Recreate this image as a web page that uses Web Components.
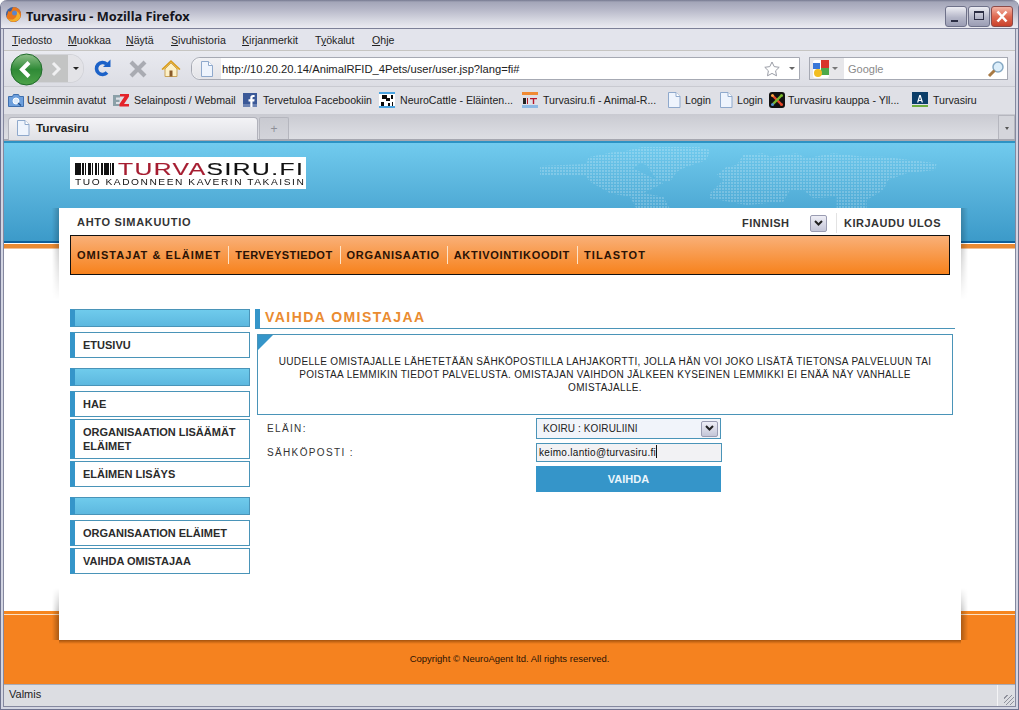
<!DOCTYPE html>
<html lang="fi">
<head>
<meta charset="utf-8">
<title>Turvasiru - Mozilla Firefox</title>
<style>
  html, body { margin: 0; height: 100%; overflow: hidden; background: #fff; }
</style>
</head>
<body>
<browser-window>
  <title-bar>Turvasiru - Mozilla Firefox</title-bar>
  <menu-bar></menu-bar>
  <nav-bar></nav-bar>
  <bookmarks-bar></bookmarks-bar>
  <tab-strip></tab-strip>
  <site-page>
    <site-banner></site-banner>
    <site-card>
      <user-row></user-row>
      <main-nav></main-nav>
      <content-area>
        <side-menu></side-menu>
        <owner-form></owner-form>
      </content-area>
    </site-card>
    <site-footer></site-footer>
  </site-page>
  <status-bar>Valmis</status-bar>
</browser-window>

<script>
const UI_FONT = '"Liberation Sans", Arial, sans-serif';
const CHROME_FONT = '"Liberation Sans", Arial, sans-serif';

// Small icons shared by the bookmarks toolbar and the tab
const ICONS = {
  page: `<svg width="16" height="16" viewBox="0 0 16 16"><path d="M2.500 .5h7.500l4 4v11h-11.500z" fill="#eef4fd" stroke="#8fa9cc"/><path d="M10 .5v4h4" fill="#fff" stroke="#8fa9cc"/></svg>`,
  history: `<svg width="16" height="16" viewBox="0 0 16 16"><path d="M.5 4.500h4l1-2h5l1 2h4v10h-15z" fill="#6d9fdc" stroke="#3f6fae"/><circle cx="8" cy="9" r="3" fill="#dcebfb" stroke="#fff"/><path d="M10 11l3 2.500" stroke="#24508c" stroke-width="1.500"/></svg>`,
  ez: `<svg width="16" height="16" viewBox="0 0 16 16"><path d="M0 3h7v2.500H3v2.200h3.500v2.200H3v2H7V14H0z" fill="#8ba0a8"/><path d="M7 2h9v2.500L11 12h5v2.500H6.500V12l5-7.500H7z" fill="#e3232a"/></svg>`,
  fb: `<svg width="16" height="16" viewBox="0 0 16 16"><rect x="1" y="1" width="14" height="14" fill="#3b5998"/><rect x="1" y="12" width="14" height="3" fill="#6d84b4"/><path d="M10.500 15V9.500h1.800l.3-2.200h-2.100V6c0-.7.2-1.100 1.100-1.100h1V3c-.3 0-.9-.1-1.500-.1-1.700 0-2.800 1-2.800 2.800v1.600H6.500v2.200h1.800V15z" fill="#fff"/></svg>`,
  cattle: `<svg width="16" height="16" viewBox="0 0 16 16"><rect width="16" height="16" fill="#fff"/><path d="M0 0h16v2H0zM0 14h16v2H0z" fill="#4aa3e0"/><path d="M3 3h5v3h3v3H7V7H3zM12 3h2v4h-2zM2 10h3v4H2zM9 11h2v3H9zM13 10h1v4h-1z" fill="#0a0a0a"/></svg>`,
  it: `<svg width="16" height="16" viewBox="0 0 16 16"><rect width="16" height="3" fill="#f08a33"/><rect y="13" width="16" height="3" fill="#8db9e4"/><rect x="1" y="6" width="3" height="6" fill="#222"/><rect x="5" y="6" width="1" height="6" fill="#b5172b"/><path d="M8 6h7v1.200h-2.800V12h-1.400V7.200H8z" fill="#b5172b"/></svg>`,
  joomla: `<svg width="16" height="16" viewBox="0 0 16 16"><rect width="16" height="16" rx="3" fill="#111"/><path d="M4 4l8 8" stroke="#e8482b" stroke-width="2.400"/><path d="M12 4l-8 8" stroke="#7ab92d" stroke-width="2.400"/><circle cx="3.500" cy="3.500" r="1.500" fill="#f9a541"/><circle cx="12.500" cy="3.500" r="1.500" fill="#7ab92d"/><circle cx="3.500" cy="12.500" r="1.500" fill="#5091cd"/><circle cx="12.500" cy="12.500" r="1.500" fill="#e8482b"/></svg>`,
  a: `<svg width="16" height="16" viewBox="0 0 16 16"><rect width="16" height="12" fill="#0b3d68"/><rect y="13" width="16" height="2" fill="#6fae3d"/><path d="M5 10.500L7.300 3h1.400L11 10.500H9.600l-.4-1.500H6.800l-.4 1.500zM7.100 7.900h1.800L8 4.700z" fill="#fff"/></svg>`,
};

// Base class: subclasses give css() and html(), the shadow root is filled once
class ShadowBlock extends HTMLElement {
  connectedCallback() {
    if (this.shadowRoot) return;
    this.attachShadow({ mode: 'open' });
    this.shadowRoot.innerHTML = `<style>${this.css()}</style>${this.html()}`;
  }

  css() { return ':host { display: block; }'; }

  html() { return '<slot></slot>'; }
}

// Window frame: outer dark line, pale band, inner dark line (4px in all)
class BrowserWindow extends ShadowBlock {
  css() {
    return `:host {
      display: block; box-sizing: border-box;
      width: 1019px; height: 710px; overflow: hidden;
      border: 1px solid #6f738f; border-top: 0; padding: 0 2px 2px;
      border-radius: 7px 7px 0 0;
      background: #d3d5e2; font-family: ${CHROME_FONT}; font-size: 11px; color: #111;
    }
    .inner {
      display: flex; flex-direction: column; box-sizing: border-box; height: 100%;
      border: 1px solid #85889f; border-top: 0; background: #dfe0e6;
    }`;
  }

  html() { return '<div class="inner"><slot></slot></div>'; }
}

class TitleBar extends ShadowBlock {
  css() {
    return `:host {
      display: flex; align-items: center; height: 29px; flex: none; box-sizing: border-box;
      margin: 0 -4px; padding: 1px 6px 0 5px; gap: 4px;
      background: linear-gradient(#75788f 0, #a3a5b8 2px, #b5b6c7 9px, #d6d7e1 20px, #e9e9f0 27px);
      border-bottom: 1px solid #7d8098;
    }
    .title { flex: 1; font: bold 12.800px "Noto Sans", sans-serif; color: #15151c; padding-top: 3px; }
    .btns { display: flex; gap: 1px; margin-top: 3px; }
    .btn {
      box-sizing: border-box; width: 22px; height: 21px; border: 1px solid #6e7189; border-radius: 3px;
      background: linear-gradient(#eeeef4, #b4b6c8 55%, #9b9db4);
      position: relative;
    }
    .min::after { content: ""; position: absolute; left: 5px; bottom: 4px; width: 7px; height: 2px; background: #2c2e44; }
    .max::after { content: ""; position: absolute; left: 5px; top: 4px; width: 10px; height: 9px; border: 1px solid #2c2e44; border-top-width: 2px; box-sizing: border-box; }
    .close { background: linear-gradient(#f2b3a5, #df6a52 50%, #c9412c); border-color: #8c4a48; }
    svg { display: block; }`;
  }

  html() {
    return `<svg width="17" height="17" viewBox="0 0 17 17">
        <circle cx="8.500" cy="8.500" r="7.500" fill="#3d5f9c"/>
        <path d="M8.500 1a7.500 7.500 0 1 1-7 10C2 8 3 8 3 5c1.500 1 3 .5 3.500-.5.500-1.500 1-2.500 2-3.500z" fill="#e8761c"/>
        <path d="M15.500 10.500A7.500 7.500 0 0 1 2 12c3 2.500 7 2 9-1 1.500-2.500 0-5-2-5 2-2 5-.5 6.500 4.500z" fill="#f3b02c"/>
        <circle cx="9.500" cy="7" r="2.500" fill="#5e85c8"/>
      </svg>
      <span class="title"><slot></slot></span>
      <div class="btns">
        <div class="btn min"></div>
        <div class="btn max"></div>
        <div class="btn close"><svg width="20" height="19" viewBox="0 0 20 19"><path d="M5.500 4.500l9 10M14.500 4.500l-9 10" stroke="#fff" stroke-width="2.600"/></svg></div>
      </div>`;
  }
}

class MenuBar extends ShadowBlock {
  css() {
    return `:host {
      display: flex; align-items: center; height: 22px; flex: none; box-sizing: border-box;
      padding: 1px 0 0 8px; background: #e3e4ec; border-bottom: 1px solid #c6c5c2;
      font-size: 10.600px; color: #222;
    }
    span { flex: none; }
    u { text-decoration-thickness: 1px; text-underline-offset: 1px; }`;
  }

  html() {
    const items = [['<u>T</u>iedosto', 56], ['<u>M</u>uokkaa', 58], ['<u>N</u>äytä', 45], ['<u>S</u>ivuhistoria', 71],
      ['<u>K</u>irjanmerkit', 73], ['T<u>y</u>ökalut', 57], ['<u>O</u>hje', 30]];
    return items.map(([m, w]) => `<span style="width:${w}px">${m}</span>`).join('');
  }
}

class NavBar extends ShadowBlock {
  css() {
    return `:host {
      display: flex; align-items: center; height: 36px; flex: none; box-sizing: border-box;
      padding: 0 6px 0 6px; background: linear-gradient(#e9eaf0, #dcdde4); border-bottom: 1px solid #c9cad1;
      position: relative;
    }
    svg { display: block; flex: none; }
    .back-fwd { position: relative; width: 76px; height: 34px; flex: none; }
    .pill {
      position: absolute; left: 16px; top: 3px; width: 57px; height: 27px; border-radius: 0 13px 13px 0;
      background: linear-gradient(to right, #c3c4c4 0 42px, #e3e3e7 42px);
      box-shadow: 0 0 0 1px #d2d3d8;
    }
    .back { position: absolute; left: 0; top: 1px; }
    .fwd { position: absolute; left: 41px; top: 9px; }
    .drop { position: absolute; left: 63px; top: 15px; width: 0; height: 0; border: 3px solid transparent; border-top: 3px solid #222; }
    .url {
      box-sizing: border-box; flex: none; width: 609px; height: 23px; margin-left: 10px;
      display: flex; align-items: center; background: #fff; border: 1px solid #a6a9b3; border-radius: 9px 0 0 9px;
      font-size: 11px; color: #222; position: relative;
    }
    .site { width: 29px; height: 21px; display: flex; align-items: center; justify-content: center; background: linear-gradient(#f1f1f4, #e4e4e8); border-radius: 9px 0 0 9px; flex: none; }
    .text { flex: 1; padding: 1px 0 0 1px; font-size: 11.200px; }
    .marker { width: 0; height: 0; border: 3px solid transparent; border-top: 3px solid #666; margin: 3px 4px 0 9px; }
    .search {
      box-sizing: border-box; flex: none; width: 199px; height: 23px; margin-left: 9px;
      display: flex; align-items: center; background: #fff; border: 1px solid #a6a9b3;
      color: #8a8a8a; font-size: 11px;
    }
    .engine { display: flex; align-items: center; gap: 3px; padding: 0 6px 0 3px; height: 21px; background: #e7e7ea; }
    .engine i { width: 0; height: 0; border: 3px solid transparent; border-top: 3px solid #777; margin-top: 3px; }
    .q { flex: 1; padding: 1px 0 0 4px; }
    .glass { margin-right: 2px; }`;
  }

  html() {
    return `<div class="back-fwd">
        <div class="pill"></div>
        <svg class="back" width="33" height="33" viewBox="0 0 33 33">
          <defs><linearGradient id="g" x1="0" y1="0" x2="0" y2="1"><stop offset="0" stop-color="#8fc08a"/><stop offset=".5" stop-color="#2f8a36"/><stop offset="1" stop-color="#4ea34a"/></linearGradient></defs>
          <circle cx="16.500" cy="16.500" r="15.500" fill="url(#g)" stroke="#1f6a2a"/>
          <path d="M19 9.500l-7 7 7 7" fill="none" stroke="#fff" stroke-width="4"/>
        </svg>
        <svg class="fwd" width="10" height="16" viewBox="0 0 10 16"><path d="M2 2l6 6-6 6" fill="none" stroke="#f0f0f2" stroke-width="3"/></svg>
        <div class="drop"></div>
      </div>
      <svg style="margin-left:6px" width="20" height="20" viewBox="0 0 20 20"><path d="M15 13.500A6 6 0 1 1 14.500 5" fill="none" stroke="#1c62c8" stroke-width="3.600"/><path d="M11 8h7.500V.500z" fill="#1c62c8"/></svg>
      <svg style="margin-left:16px" width="20" height="20" viewBox="0 0 20 20"><path d="M3 3l14 14M17 3L3 17" stroke="#a9abb2" stroke-width="4.200"/></svg>
      <svg style="margin-left:13px" width="20" height="20" viewBox="0 0 20 20"><path d="M1 10.500L10 2l9 8.500" fill="#f6c64a" stroke="#d69a1e" stroke-width="1.400"/><path d="M4 10l6-6 6 6v7.500H4z" fill="#fdf1c8" stroke="#c9a35a"/><path d="M8.500 11.500h3v6h-3z" fill="#8a5a2a"/></svg>
      <div class="url">
        <div class="site"><svg width="14" height="16" viewBox="0 0 14 16"><path d="M1.500 .5h7l4 4v11h-11z" fill="#eef4fd" stroke="#8fa9cc"/><path d="M8.500 .5v4h4" fill="#fff" stroke="#8fa9cc"/></svg></div>
        <span class="text">http://10.20.20.14/AnimalRFID_4Pets/user/user.jsp?lang=fi#</span>
        <svg width="16" height="16" viewBox="0 0 16 16"><path d="M8 1l2.200 4.600 5 .7-3.600 3.500.9 5L8 12.400l-4.500 2.400.9-5L.8 6.300l5-.7z" fill="#fff" stroke="#9a9da6"/></svg>
        <div class="marker"></div>
      </div>
      <div class="search">
        <div class="engine">
          <svg width="16" height="18" viewBox="0 0 16 18"><rect width="16" height="18" rx="2" fill="#fff"/><path d="M8 0h8v8H8z" fill="#d8352a"/><path d="M8 8h8v7H8z" fill="#4da94a"/><path d="M0 3h7v6H0z" fill="#3a78d8"/><circle cx="5" cy="13" r="4" fill="#f2be20"/></svg>
          <i></i>
        </div>
        <span class="q">Google</span>
        <svg class="glass" width="18" height="18" viewBox="0 0 18 18"><circle cx="11" cy="7" r="5" fill="#dceefa" stroke="#86a9c4" stroke-width="1.500"/><path d="M7.500 10.500L2 16" stroke="#a87a44" stroke-width="3"/></svg>
      </div>`;
  }
}

class BookmarksBar extends ShadowBlock {
  css() {
    return `:host {
      display: flex; align-items: center; height: 27px; flex: none; box-sizing: border-box;
      padding: 0 0 2px 4px; background: #dfe0e6; font-size: 10.600px; color: #222;
    }
    .b { display: flex; align-items: center; gap: 5px; white-space: nowrap; flex: none; box-sizing: border-box; }
    .b.tight { gap: 3px; }
    svg { display: block; flex: none; }`;
  }

  html() {
    const items = [
      ['history', 'Useimmin avatut', 105, 'tight'], ['ez', 'Selainposti / Webmail', 129], ['fb', 'Tervetuloa Facebookiin', 137],
      ['cattle', 'NeuroCattle - Eläinten...', 143], ['it', 'Turvasiru.fi - Animal-R...', 144], ['page', 'Login', 52, 'tight'],
      ['page', 'Login', 51, 'tight'], ['joomla', 'Turvasiru kauppa - Yll...', 143, 'tight'], ['a', 'Turvasiru', 80],
    ];
    return items.map(([icon, label, w, cls = '']) => `<span class="b ${cls}" style="width:${w}px">${ICONS[icon]}<span>${label}</span></span>`).join('');
  }
}

class TabStrip extends ShadowBlock {
  css() {
    return `:host {
      display: flex; align-items: flex-end; height: 27px; flex: none; box-sizing: border-box;
      padding: 0 0 0 4px; background: linear-gradient(#c9cad1, #d8d9df 70%, #dddee3);
      border-bottom: 2px solid #a6a7b0; position: relative;
    }
    .tab {
      box-sizing: border-box; width: 250px; height: 23px; margin-bottom: -1px; padding: 0 0 2px 6px;
      display: flex; align-items: center; gap: 5px;
      background: linear-gradient(#f3f3f6, #dfe0e5); border: 1px solid #b1b2bb; border-bottom: 0; border-radius: 4px 4px 0 0;
      font-weight: bold; font-size: 11.800px; color: #222;
    }
    .new {
      box-sizing: border-box; width: 30px; height: 22px; margin-left: 1px; display: flex; align-items: center; justify-content: center;
      background: linear-gradient(#c9cad1, #d3d4da); border: 1px solid #b5b6be; border-bottom: 0; color: #8e8f98; font-size: 12px; border-radius: 2px 2px 0 0;
    }
    .all {
      margin-left: auto; box-sizing: border-box; width: 17px; height: 24px; border: 1px solid #b5b6be; border-bottom: 0;
      display: flex; align-items: center; justify-content: center; background: #d4d5db;
    }
    .all i { width: 0; height: 0; border: 2.500px solid transparent; border-top: 3px solid #555; margin-top: 3px; }
    svg { display: block; }`;
  }

  html() {
    return `<div class="tab">${ICONS.page}<span>Turvasiru</span></div>
      <div class="new">+</div>
      <div class="all"><i></i></div>`;
  }
}

// The web page: background bands and the white card share one grid cell
class SitePage extends ShadowBlock {
  css() {
    return `:host {
      display: grid; flex: 1; min-height: 0; font-family: ${UI_FONT}; color: #222;
      grid-template-columns: 1fr; grid-template-rows: 1fr; background: #fff;
    }
    ::slotted(site-banner) { grid-area: 1 / 1; align-self: start; }
    ::slotted(site-footer) { grid-area: 1 / 1; align-self: end; }
    ::slotted(site-card) { grid-area: 1 / 1; align-self: start; z-index: 1; }`;
  }
}

class SiteBanner extends ShadowBlock {
  css() {
    return `:host { display: block; }
    .sky {
      position: relative; height: 102px; box-sizing: border-box; padding: 13px 0 0 66px;
      border-top: 2px solid #2d93c4;
      background: linear-gradient(#71cbee 0, #5fb9e0 35%, #3c9ac9 100%);
      border-bottom: 2px solid #0d5f9a;
    }
    .rule { height: 4px; background: #e98a33; border-bottom: 1px solid #f3c096; margin-top: 1px; }
    .map { position: absolute; left: 536px; top: 4px; }
    .logo {
      width: 236px; height: 32px; background: #fff; box-sizing: border-box; margin-top: 1px;
      display: grid; grid-template-columns: 40px 1fr; grid-template-rows: 19px 13px; column-gap: 3px; padding: 0 0 0 5px;
      color: #111; overflow: hidden; white-space: nowrap;
    }
    .bars { align-self: end; margin-bottom: 1px; }
    .name {
      font: 17px/19px "Liberation Sans", sans-serif; letter-spacing: 1px; padding-top: 3px;
      transform: scaleX(1.45); transform-origin: left; -webkit-text-stroke: .15px currentColor;
    }
    .name b { font-weight: normal; color: #a51c30; }
    .tag {
      grid-column: 1 / 3; font: 8.500px/11px "Liberation Sans", sans-serif; letter-spacing: 1.280px; padding-top: 1px;
      transform: scaleX(1.2); transform-origin: left;
    }`;
  }

  html() {
    return `<div class="sky">
        <svg class="map" width="400" height="62" viewBox="30 21 1200 186">
          <defs><pattern id="d" width="9" height="9" patternUnits="userSpaceOnUse"><rect width="6" height="6" fill="#fff" fill-opacity=".2"/></pattern></defs>
          <path fill="url(#d)" d="M30 78L170 72 175 52 240 38 290 32 340 20 480 15 540 30 530 60 470 80 440 95 420 125 380 120 350 75 330 70 310 85 360 110 400 130 340 160 400 170 420 207H320L300 170 240 160 180 125 165 105H30z"/>
          <path fill="url(#d)" d="M640 45L700 40 720 50 800 40 830 55 910 40 1000 50 1060 50 1220 70 1215 90 1130 100 1075 120 1060 150 1010 180 1010 207H920V170L850 175 820 150 780 150 760 185 650 195 540 175V160L580 120 560 105 590 80 620 75z"/>
        </svg>
        <div class="logo">
          <svg class="bars" width="40" height="12" viewBox="0 0 40 12"><path d="M0 0h6v12H0zM7 0h2v12H7zM10 0h1v12h-1zM13 0h3v12h-3zM17 0h1v12h-1zM20 0h2v12h-2zM23 0h1v12h-1zM26 0h2v12h-2zM29 0h5v12h-5zM35 0h1v12h-1zM37 0h2v12h-2z" fill="#111"/></svg>
          <div class="name"><b>TURVA</b>SIRU.FI</div>
          <div class="tag">TUO KADONNEEN KAVERIN TAKAISIN</div>
        </div>
      </div>
      <div class="rule"></div>`;
  }
}

class SiteFooter extends ShadowBlock {
  css() {
    return `:host { display: block; }
    .line { height: 3px; background: #f5861f; border-bottom: 1px solid #fbe0c4; }
    .foot {
      height: 69px; background: #f5821f; box-sizing: border-box; padding-top: 38px;
      text-align: center; font-size: 9.500px; line-height: 11px; color: #2a1205;
    }`;
  }

  html() {
    return '<div class="line"></div><div class="foot">Copyright © NeuroAgent ltd. All rights reserved.</div>';
  }
}

class SiteCard extends ShadowBlock {
  css() {
    return `:host {
      display: block; position: relative; box-sizing: border-box;
      width: 902px; height: 432px; margin: 67px 0 0 55px; padding: 0 11px;
    }
    .paper { position: absolute; inset: 0; z-index: -1; background: #fff; }
    .sh { position: absolute; z-index: -1; left: -7px; right: -7px; }
    .top {
      top: 0; height: 92px;
      background: linear-gradient(to right, transparent, rgba(0,0,0,.2) 7px, rgba(0,0,0,.2) calc(100% - 7px), transparent);
      -webkit-mask-image: linear-gradient(#000 40%, transparent);
      mask-image: linear-gradient(#000 40%, transparent);
    }
    .low {
      bottom: 0; height: 52px;
      background: linear-gradient(to right, transparent, rgba(0,0,0,.3) 7px, rgba(0,0,0,.3) calc(100% - 7px), transparent);
      -webkit-mask-image: linear-gradient(transparent, #000 60%);
      mask-image: linear-gradient(transparent, #000 60%);
    }
    .under { position: absolute; z-index: -1; left: 0; right: 0; bottom: -4px; height: 4px; background: linear-gradient(rgba(110,50,0,.6), transparent); }`;
  }

  html() {
    return '<div class="sh top"></div><div class="sh low"></div><div class="under"></div><div class="paper"></div><slot></slot>';
  }
}

class UserRow extends ShadowBlock {
  css() {
    return `:host {
      display: flex; align-items: center; height: 27px; box-sizing: border-box; padding: 3px 9px 0 7px;
      font: bold 11px ${UI_FONT}; letter-spacing: .7px; color: #333;
    }
    .name { flex: 1; margin-top: -2px; }
    .lang { width: 68px; letter-spacing: .5px; }
    .exit { letter-spacing: .5px; }
    .arrow {
      box-sizing: border-box; width: 17px; height: 17px; border: 1px solid #9a9cb2; border-radius: 2px;
      background: linear-gradient(#eeeef6, #c4c6d8); display: flex; align-items: center; justify-content: center;
    }
    .sep { width: 1px; height: 20px; background: #e3e3e3; margin: 0 7px 0 9px; }
    svg { display: block; }`;
  }

  html() {
    return `<span class="name">AHTO SIMAKUUTIO</span>
      <span class="lang">FINNISH</span>
      <span class="arrow"><svg width="9" height="7" viewBox="0 0 9 7"><path d="M1 1l3.500 3.500L8 1" fill="none" stroke="#222" stroke-width="2"/></svg></span>
      <span class="sep"></span>
      <span class="exit">KIRJAUDU ULOS</span>`;
  }
}

class MainNav extends ShadowBlock {
  css() {
    return `:host {
      display: flex; align-items: center; box-sizing: border-box; height: 40px; padding: 0 0 0 6px;
      border: 1px solid #111; background: linear-gradient(#f9b078, #f7821c);
      font: bold 11px ${UI_FONT}; color: #2a1205; white-space: nowrap;
    }
    span + span { border-left: 1px solid #fde3c8; margin-left: 7px; padding-left: 6px; line-height: 18px; }`;
  }

  html() {
    const items = [['OMISTAJAT &amp; ELÄIMET', 1.05], ['TERVEYSTIEDOT', 0.45], ['ORGANISAATIO', 0.7],
      ['AKTIVOINTIKOODIT', 0.7], ['TILASTOT', 1.05]];
    return items.map(([t, ls]) => `<span style="letter-spacing:${ls}px">${t}</span>`).join('');
  }
}

class ContentArea extends ShadowBlock {
  css() {
    return ':host { display: grid; grid-template-columns: 180px 700px; column-gap: 5px; padding-top: 34px; }';
  }
}

class SideMenu extends ShadowBlock {
  css() {
    return `:host { display: flex; flex-direction: column; font: bold 11px ${UI_FONT}; color: #2b2b2b; }
    .head {
      box-sizing: border-box; height: 18px; margin: 10px 0 5px;
      border: 1px solid #4a94b8; border-left: 5px solid #3595c9;
      background: linear-gradient(#6fcbec, #5db8df);
    }
    .head:first-of-type { margin-top: 0; }
    .item {
      box-sizing: border-box; min-height: 26px; margin-bottom: 2px; padding: 5px 6px 5px 8px;
      border: 1px solid #4a94b8; border-left: 5px solid #3595c9; line-height: 14px;
      background: #fff;
    }
    .item.last { margin-bottom: 0; }`;
  }

  html() {
    const item = (t, last) => `<div class="item${last ? ' last' : ''}">${t}</div>`;
    return `<div class="head"></div>${item('ETUSIVU', true)}
      <div class="head"></div>${item('HAE')}${item('ORGANISAATION LISÄÄMÄT ELÄIMET')}${item('ELÄIMEN LISÄYS', true)}
      <div class="head"></div>${item('ORGANISAATION ELÄIMET')}${item('VAIHDA OMISTAJAA', true)}`;
  }
}

class OwnerForm extends ShadowBlock {
  css() {
    return `:host { display: block; font-family: ${UI_FONT}; color: #222; }
    h1 {
      margin: 0; box-sizing: border-box; height: 20px; width: 700px; padding-left: 5px;
      border-left: 5px solid #3595c9; border-bottom: 1px solid #4a94b8;
      font: bold 14px/17px ${UI_FONT}; letter-spacing: 1.450px; color: #ea8b30;
    }
    .note {
      position: relative; box-sizing: border-box; width: 696px; height: 81px; margin: 5px 0 0 2px; padding: 20px 10px 0;
      border: 1px solid #4a94b8; text-align: center;
      font-size: 10px; line-height: 13px; letter-spacing: .34px; color: #222;
    }
    .note::before {
      content: ""; position: absolute; left: 0; top: 0;
      border-top: 15px solid #3595c9; border-right: 15px solid transparent;
    }
    .fields { display: grid; grid-template-columns: 269px 186px; margin: 3px 0 0 12px; row-gap: 4px; align-items: center; }
    label { font-size: 10px; letter-spacing: 1.350px; color: #333; }
    .select {
      box-sizing: border-box; width: 185px; height: 21px; display: flex; align-items: center; justify-content: space-between;
      padding: 0 2px 0 6px; border: 1px solid #4a94b8; background: #f1f4fa; font-size: 10px; letter-spacing: .1px;
    }
    .arrow {
      box-sizing: border-box; width: 17px; height: 16px; border: 1px solid #9a9cb2; border-radius: 2px;
      background: linear-gradient(#eeeef6, #c4c6d8); display: flex; align-items: center; justify-content: center;
    }
    .input {
      box-sizing: border-box; width: 186px; height: 19px; padding-left: 2px; line-height: 17px;
      border: 1px solid #4a94b8; background: #f2f2f4; font-size: 10px; letter-spacing: .3px; color: #111;
    }
    .input i { display: inline-block; width: 1px; height: 13px; background: #111; vertical-align: -2px; }
    .submit {
      grid-column: 2; box-sizing: border-box; width: 185px; height: 26px; background: #3595c9; color: #eaf6fc;
      display: flex; align-items: center; justify-content: center; font: bold 11px ${UI_FONT};
    }
    svg { display: block; }`;
  }

  html() {
    return `<h1>VAIHDA OMISTAJAA</h1>
      <div class="note">UUDELLE OMISTAJALLE LÄHETETÄÄN SÄHKÖPOSTILLA LAHJAKORTTI, JOLLA HÄN VOI JOKO LISÄTÄ TIETONSA PALVELUUN TAI<br>POISTAA LEMMIKIN TIEDOT PALVELUSTA. OMISTAJAN VAIHDON JÄLKEEN KYSEINEN LEMMIKKI EI ENÄÄ NÄY VANHALLE<br>OMISTAJALLE.</div>
      <div class="fields">
        <label>ELÄIN:</label>
        <div class="select"><span>KOIRU : KOIRULIINI</span><span class="arrow"><svg width="9" height="7" viewBox="0 0 9 7"><path d="M1 1l3.500 3.500L8 1" fill="none" stroke="#222" stroke-width="2"/></svg></span></div>
        <label>SÄHKÖPOSTI :</label>
        <div class="input">keimo.lantio@turvasiru.fi<i></i></div>
        <div class="submit">VAIHDA</div>
      </div>`;
  }
}

class StatusBar extends ShadowBlock {
  css() {
    return `:host {
      display: flex; align-items: center; height: 22px; flex: none; box-sizing: border-box; padding: 0 0 3px 5px;
      background: #dcdde2; border-top: 1px solid #a9abb6; font-size: 11px; color: #222; position: relative;
    }
    .grip { position: absolute; right: 0; top: 0; bottom: 0; width: 17px; border-left: 1px solid #f4f4f6; }
    .grip::after {
      content: ""; position: absolute; right: 1px; bottom: 1px; width: 10px; height: 10px;
      background: repeating-linear-gradient(135deg, transparent 0 2px, #8f919c 2px 3px);
    }`;
  }

  html() { return '<slot></slot><div class="grip"></div>'; }
}

customElements.define('browser-window', BrowserWindow);
customElements.define('title-bar', TitleBar);
customElements.define('menu-bar', MenuBar);
customElements.define('nav-bar', NavBar);
customElements.define('bookmarks-bar', BookmarksBar);
customElements.define('tab-strip', TabStrip);
customElements.define('site-page', SitePage);
customElements.define('site-banner', SiteBanner);
customElements.define('site-footer', SiteFooter);
customElements.define('site-card', SiteCard);
customElements.define('user-row', UserRow);
customElements.define('main-nav', MainNav);
customElements.define('content-area', ContentArea);
customElements.define('side-menu', SideMenu);
customElements.define('owner-form', OwnerForm);
customElements.define('status-bar', StatusBar);
</script>
</body>
</html>
